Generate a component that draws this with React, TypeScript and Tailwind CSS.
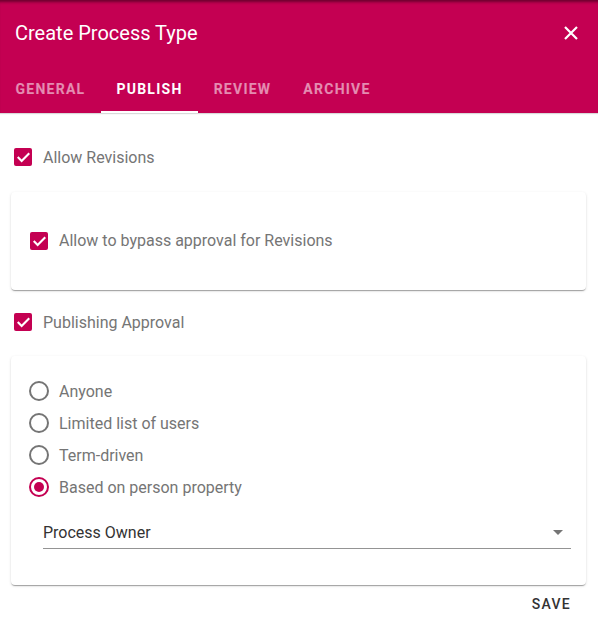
import React from 'react';

const PINK = 'bg-[#c40052]';

function Checkbox() {
  return (
    <span className={`flex h-[18px] w-[18px] items-center justify-center rounded-[2px] ${PINK}`}>
      <svg width="15" height="15" viewBox="0 0 24 24" fill="none">
        <path d="M4 12.5l5 5 11-11" stroke="white" strokeWidth="3.4" strokeLinecap="square" />
      </svg>
    </span>
  );
}

function Radio({ checked }: { checked?: boolean }) {
  return (
    <span
      className={`flex h-[20px] w-[20px] items-center justify-center rounded-full border-2 ${
        checked ? 'border-[#c40052]' : 'border-[#757575]'
      }`}
    >
      {checked && <span className="h-[10px] w-[10px] rounded-full bg-[#c40052]" />}
    </span>
  );
}

const tabs = [
  { label: 'General', w: 'w-[101px]' },
  { label: 'Publish', w: 'w-[97px]', active: true },
  { label: 'Review', w: 'w-[89px]' },
  { label: 'Archive', w: 'w-[100px]' },
];

const options = ['Anyone', 'Limited list of users', 'Term-driven', 'Based on person property'];

const cardShadow =
  'rounded-[4px] bg-white shadow-[0_2px_1px_-1px_rgba(0,0,0,0.2),0_1px_1px_0_rgba(0,0,0,0.14),0_1px_3px_0_rgba(0,0,0,0.12)]';

export default function App() {
  return (
    <div className="h-[620px] w-[598px] overflow-hidden bg-white font-['Roboto',sans-serif]">
      {/* Header */}
      <div className={`${PINK} shadow-[inset_0_4px_3px_-2px_rgba(0,0,0,0.45),0_1px_1px_rgba(0,0,0,0.15)]`}>
        <div className="flex h-[65px] items-center justify-between pl-[15px] pr-[19px]">
          <h1 className="text-[20px] text-white">Create Process Type</h1>
          <svg width="16" height="16" viewBox="0 0 16 16">
            <path d="M2 2l12 12M14 2L2 14" stroke="white" strokeWidth="2.2" />
          </svg>
        </div>
        <div className="flex h-[48px]">
          {tabs.map((t) => (
            <div
              key={t.label}
              className={`relative flex items-center justify-center pt-[1px] ${t.w} text-[14px] font-bold uppercase tracking-[1.25px] ${
                t.active ? 'text-white' : 'text-white/55'
              }`}
            >
              {t.label}
              {t.active && <span className="absolute bottom-0 left-0 right-0 h-[2px] bg-white" />}
            </div>
          ))}
        </div>
      </div>

      {/* Body */}
      <div className="flex flex-col pl-[11px] pr-[12px] text-[16px] text-[#757575]">
        <div className="mt-[32px] flex h-[24px] items-center gap-[11px] pl-[3px]">
          <Checkbox />
          <span className="pt-[2px]">Allow Revisions</span>
        </div>

        <div className={`mt-[23px] flex h-[98px] items-center gap-[11px] pl-[19px] ${cardShadow}`}>
          <Checkbox />
          <span>Allow to bypass approval for Revisions</span>
        </div>

        <div className="mt-[20px] flex h-[24px] items-center gap-[11px] pl-[3px]">
          <Checkbox />
          <span className="pt-[2px]">Publishing Approval</span>
        </div>

        <div className={`mt-[22px] flex flex-col pb-[36px] pl-[18px] pr-[15px] pt-[19px] ${cardShadow}`}>
          {options.map((o, i) => (
            <div key={o} className="flex h-[32px] items-center gap-[10px]">
              <Radio checked={i === 3} />
              <span className="pt-[2px]">{o}</span>
            </div>
          ))}
          <div className="ml-[14px] mt-[10px] flex h-[36px] items-center justify-between border-b border-[#949494] pt-[4px]">
            <span className="text-[#333333]">Process Owner</span>
            <svg width="10" height="5" viewBox="0 0 10 5" className="mr-[8px]">
              <path d="M0 0h10L5 5z" fill="#757575" />
            </svg>
          </div>
        </div>

        <div className="flex h-[38px] items-center justify-end pr-[15px]">
          <span className="text-[14px] font-medium tracking-[1.25px] text-[#333333]">SAVE</span>
        </div>
      </div>
    </div>
  );
}
